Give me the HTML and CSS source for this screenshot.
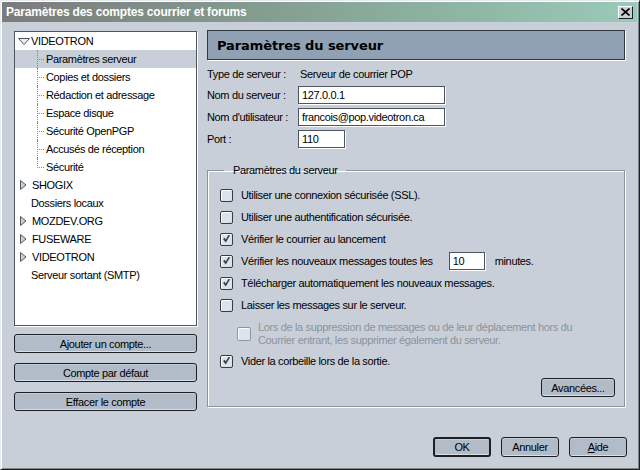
FILE: index.html
```html
<!DOCTYPE html>
<html lang="fr">
<head>
<meta charset="utf-8">
<title>Paramètres des comptes courrier et forums</title>
<link rel="stylesheet" href="styles.css">
</head>
<body>
<div class="window">
  <div class="titlebar">
    <span class="title">Paramètres des comptes courrier et forums</span>
    <span class="close"><svg width="9" height="8" viewBox="0 0 9 8"><path d="M0.5 0.5 L8.5 7.5 M8.5 0.5 L0.5 7.5" stroke="#000" stroke-width="1.6" fill="none"/></svg></span>
  </div>
  <div class="main">
    <div class="left">
      <div class="tree">
        <div class="row top"><svg class="tw" width="12" height="7" viewBox="0 0 12 7"><path d="M0.5 0.5 H11.5 L6 6.5 Z" fill="#e8ecf0" stroke="#505860"/></svg>VIDEOTRON</div>
        <div class="row sub sel"><span class="conn"></span>Paramètres serveur</div>
        <div class="row sub"><span class="conn"></span>Copies et dossiers</div>
        <div class="row sub"><span class="conn"></span>Rédaction et adressage</div>
        <div class="row sub"><span class="conn"></span>Espace disque</div>
        <div class="row sub"><span class="conn"></span>Sécurité OpenPGP</div>
        <div class="row sub"><span class="conn"></span>Accusés de réception</div>
        <div class="row sub last"><span class="conn"></span>Sécurité</div>
        <div class="row top"><svg class="tr" width="7" height="10" viewBox="0 0 7 10"><path d="M0.5 0.5 L6 5 L0.5 9.5 Z" fill="#c8d0d8" stroke="#505860"/></svg>SHOGIX</div>
        <div class="row top plain">Dossiers locaux</div>
        <div class="row top"><svg class="tr" width="7" height="10" viewBox="0 0 7 10"><path d="M0.5 0.5 L6 5 L0.5 9.5 Z" fill="#c8d0d8" stroke="#505860"/></svg>MOZDEV.ORG</div>
        <div class="row top"><svg class="tr" width="7" height="10" viewBox="0 0 7 10"><path d="M0.5 0.5 L6 5 L0.5 9.5 Z" fill="#c8d0d8" stroke="#505860"/></svg>FUSEWARE</div>
        <div class="row top"><svg class="tr" width="7" height="10" viewBox="0 0 7 10"><path d="M0.5 0.5 L6 5 L0.5 9.5 Z" fill="#c8d0d8" stroke="#505860"/></svg>VIDEOTRON</div>
        <div class="row top plain">Serveur sortant (SMTP)</div>
      </div>
      <button class="btn wide">Ajouter un compte...</button>
      <button class="btn wide">Compte par défaut</button>
      <button class="btn wide">Effacer le compte</button>
    </div>
    <div class="right">
      <div class="header">Paramètres du serveur</div>
      <div class="fields">
        <span class="lbl">Type de serveur :</span><span class="val">Serveur de courrier POP</span>
        <span class="lbl">Nom du serveur :</span><span class="input w147">127.0.0.1</span>
        <span class="lbl">Nom d'utilisateur :</span><span class="input w147">francois@pop.videotron.ca</span>
        <span class="lbl">Port :</span><span class="input w47">110</span>
      </div>
      <fieldset class="group">
        <legend>Paramètres du serveur</legend>
        <div class="chk"><span class="box"></span>Utiliser une connexion sécurisée (SSL).</div>
        <div class="chk"><span class="box"></span>Utiliser une authentification sécurisée.</div>
        <div class="chk"><span class="box on"></span>Vérifier le courrier au lancement</div>
        <div class="chk"><span class="box on"></span>Vérifier les nouveaux messages toutes les<span class="input w36">10</span><span class="unit">minutes.</span></div>
        <div class="chk"><span class="box on"></span>Télécharger automatiquement les nouveaux messages.</div>
        <div class="chk"><span class="box"></span>Laisser les messages sur le serveur.</div>
        <div class="chk sub2"><span class="box dis"></span><span class="distext">Lors de la suppression de messages ou de leur déplacement hors du<br>Courrier entrant, les supprimer également du serveur.</span></div>
        <div class="chk"><span class="box on"></span>Vider la corbeille lors de la sortie.</div>
        <div class="adv"><button class="btn w74">Avancées...</button></div>
      </fieldset>
    </div>
  </div>
  <div class="footer">
    <button class="btn fb default">OK</button>
    <button class="btn fb">Annuler</button>
    <button class="btn fb"><u>A</u>ide</button>
  </div>
</div>
</body>
</html>
```
FILE: styles.css
```css
html, body { margin: 0; padding: 0; }
body {
  font-family: "Liberation Sans", Arial, sans-serif;
  font-size: 11px;
  letter-spacing: -0.35px;
  color: #000;
}
.window {
  width: 640px;
  height: 470px;
  box-sizing: border-box;
  border: 1px solid;
  border-color: #e6eaee #202020 #202020 #e6eaee;
  box-shadow: inset 1px 1px 0 #ffffff, inset -1px -1px 0 #7c848c;
  padding: 1px 2px 2px 1px;
  background: #c8cfd8;
  display: flex;
  flex-direction: column;
}
.titlebar {
  height: 20px;
  flex: none;
  display: flex;
  align-items: center;
  justify-content: space-between;
  background: linear-gradient(to right, #7b7b7b 0%, #88a898 55%, #9acab8 100%);
  padding: 0 4px 0 4px;
}
.title {
  color: #fff;
  font-weight: bold;
  font-size: 12px;
  letter-spacing: -0.2px;
}
.close {
  width: 15px;
  height: 13px;
  box-sizing: border-box;
  background: #c8cfd8;
  border: 1px solid;
  border-color: #ffffff #202020 #202020 #ffffff;
  display: flex;
  align-items: center;
  justify-content: center;
}
.main {
  display: flex;
  gap: 10px;
  padding: 8px 12px 0 12px;
}
.left {
  width: 183px;
  flex: none;
  margin-top: 1px;
  display: flex;
  flex-direction: column;
}
.tree {
  height: 295px;
  box-sizing: border-box;
  background: #fff;
  border: 1px solid #4c5560;
  box-shadow: 1px 1px 0 #fff;
}
.row {
  height: 18px;
  display: flex;
  align-items: center;
  white-space: nowrap;
}
.row.top { padding-left: 16px; }
.row.plain { padding-left: 16px; }
.row .tw { margin-left: -13px; margin-right: 1px; }
.row .tr { margin-left: -11px; margin-right: 5px; }
.row.sel { background: #c8cfd8; }
.row.sub { padding-left: 22px; }
.conn {
  width: 8px;
  height: 18px;
  margin-right: 1px;
  align-self: flex-start;
  box-sizing: border-box;
  border-left: 1px dotted #8a8a8a;
  background: repeating-linear-gradient(to right, #8a8a8a 0 1px, transparent 1px 2px) no-repeat 1px 9px / 7px 1px;
}
.row.last .conn { height: 10px; background-position: 1px 9px; }
.btn {
  font-family: inherit;
  font-size: 11px;
  letter-spacing: -0.35px;
  color: #000;
  background: #b2bcc8;
  border: 1px solid #1c2024;
  border-radius: 3px;
  box-shadow: inset 0 -1px 0 #d8dee6, inset 0 1px 0 #c4ccd6;
  padding: 0;
  height: 18px;
  margin: 0;
}
.btn.wide { width: 183px; height: 19px; margin-top: 8px; }
.btn.wide + .btn.wide { margin-top: 10px; }
.right {
  flex: 1;
  display: flex;
  flex-direction: column;
}
.header {
  height: 30px;
  box-sizing: border-box;
  background: #8fa1b3;
  border: 1px solid #30383f;
  box-shadow: 1px 1px 0 #fff;
  padding-left: 9px;
  display: flex;
  align-items: center;
  font-family: "DejaVu Sans", sans-serif;
  font-weight: bold;
  font-size: 13px;
  letter-spacing: -0.1px;
}
.fields {
  display: grid;
  grid-template-columns: 91px auto;
  row-gap: 4px;
  margin-top: 6px;
  align-items: center;
  justify-items: start;
}
.lbl, .val { height: 16px; line-height: 16px; }
.val { padding-left: 2px; }
.input {
  height: 18px;
  box-sizing: border-box;
  background: #fff;
  border: 1px solid #4c5560;
  box-shadow: 1px 1px 0 #fff;
  padding-left: 3px;
  line-height: 16px;
  display: inline-block;
}
.w147 { width: 147px; }
.w47 { width: 47px; }
.w36 { width: 36px; margin-left: 16px; }
.unit { margin-left: 10px; }
.group {
  margin: 16px 0 0 0;
  padding: 8px 9px 9px 12px;
  border: 1px solid #8a939e;
  box-shadow: inset 1px 1px 0 #fff, 1px 1px 0 #fff;
  display: block;
}
.group legend {
  margin-left: 4px;
  padding: 0 8px 0 9px;
}
.chk {
  height: 22px;
  display: flex;
  align-items: center;
  white-space: nowrap;
}
.box {
  width: 13px;
  height: 13px;
  box-sizing: border-box;
  border: 1px solid #353c44;
  border-radius: 2px;
  background: #dde3ea;
  box-shadow: inset 1px 1px 0 #ffffff;
  margin-right: 8px;
  flex: none;
  position: relative;
}
.box.on::after {
  content: "";
  position: absolute;
  left: 2px;
  top: 1px;
  width: 7px;
  height: 8px;
  background: #3a4149;
  clip-path: polygon(0 55%, 25% 40%, 40% 62%, 82% 0, 100% 14%, 40% 100%);
}
.sub2 {
  height: 34px;
  box-sizing: border-box;
  padding-top: 2px;
  padding-left: 17px;
}
.box.dis { width: 14px; height: 14px; border-color: #8d959e; margin-right: 7px; }
.distext { color: #8c939c; line-height: 13px; }
.adv {
  display: flex;
  justify-content: flex-end;
  margin-top: 6px;
}
.w74 { width: 74px; height: 19px; }
.footer {
  margin-top: auto;
  display: flex;
  justify-content: flex-end;
  gap: 10px;
  padding: 0 10px 10px 0;
}
.fb { width: 58px; height: 20px; }
.fb.default { border-width: 2px; }
```
